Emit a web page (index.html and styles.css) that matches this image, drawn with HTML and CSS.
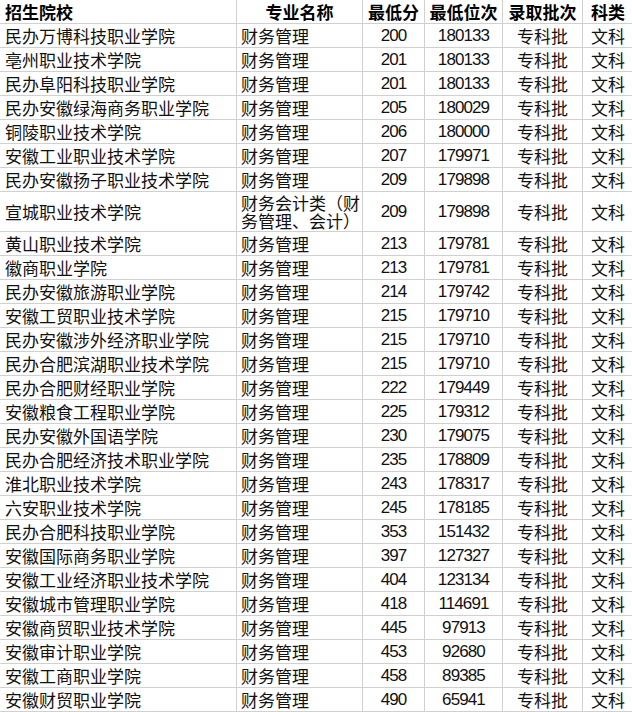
FILE: index.html
```html
<!DOCTYPE html>
<html lang="zh-CN">
<head>
<meta charset="utf-8">
<title>财务管理专业录取分数</title>
<link rel="stylesheet" href="styles.css">
</head>
<body>
<table class="sheet">
  <colgroup>
    <col class="c-school">
    <col class="c-major">
    <col class="c-score">
    <col class="c-rank">
    <col class="c-batch">
    <col class="c-type">
  </colgroup>
  <thead>
    <tr class="head">
      <th class="left">招生院校</th>
      <th>专业名称</th>
      <th>最低分</th>
      <th>最低位次</th>
      <th>录取批次</th>
      <th>科类</th>
    </tr>
  </thead>
  <tbody>
    <tr><td class="left">民办万博科技职业学院</td><td class="major">财务管理</td><td class="num">200</td><td class="num">180133</td><td>专科批</td><td>文科</td></tr>
    <tr><td class="left">亳州职业技术学院</td><td class="major">财务管理</td><td class="num">201</td><td class="num">180133</td><td>专科批</td><td>文科</td></tr>
    <tr><td class="left">民办阜阳科技职业学院</td><td class="major">财务管理</td><td class="num">201</td><td class="num">180133</td><td>专科批</td><td>文科</td></tr>
    <tr><td class="left">民办安徽绿海商务职业学院</td><td class="major">财务管理</td><td class="num">205</td><td class="num">180029</td><td>专科批</td><td>文科</td></tr>
    <tr><td class="left">铜陵职业技术学院</td><td class="major">财务管理</td><td class="num">206</td><td class="num">180000</td><td>专科批</td><td>文科</td></tr>
    <tr><td class="left">安徽工业职业技术学院</td><td class="major">财务管理</td><td class="num">207</td><td class="num">179971</td><td>专科批</td><td>文科</td></tr>
    <tr><td class="left">民办安徽扬子职业技术学院</td><td class="major">财务管理</td><td class="num">209</td><td class="num">179898</td><td>专科批</td><td>文科</td></tr>
    <tr class="tall"><td class="left">宣城职业技术学院</td><td class="major wrap">财务会计类（财务管理、会计）</td><td class="num">209</td><td class="num">179898</td><td>专科批</td><td>文科</td></tr>
    <tr><td class="left">黄山职业技术学院</td><td class="major">财务管理</td><td class="num">213</td><td class="num">179781</td><td>专科批</td><td>文科</td></tr>
    <tr><td class="left">徽商职业学院</td><td class="major">财务管理</td><td class="num">213</td><td class="num">179781</td><td>专科批</td><td>文科</td></tr>
    <tr><td class="left">民办安徽旅游职业学院</td><td class="major">财务管理</td><td class="num">214</td><td class="num">179742</td><td>专科批</td><td>文科</td></tr>
    <tr><td class="left">安徽工贸职业技术学院</td><td class="major">财务管理</td><td class="num">215</td><td class="num">179710</td><td>专科批</td><td>文科</td></tr>
    <tr><td class="left">民办安徽涉外经济职业学院</td><td class="major">财务管理</td><td class="num">215</td><td class="num">179710</td><td>专科批</td><td>文科</td></tr>
    <tr><td class="left">民办合肥滨湖职业技术学院</td><td class="major">财务管理</td><td class="num">215</td><td class="num">179710</td><td>专科批</td><td>文科</td></tr>
    <tr><td class="left">民办合肥财经职业学院</td><td class="major">财务管理</td><td class="num">222</td><td class="num">179449</td><td>专科批</td><td>文科</td></tr>
    <tr><td class="left">安徽粮食工程职业学院</td><td class="major">财务管理</td><td class="num">225</td><td class="num">179312</td><td>专科批</td><td>文科</td></tr>
    <tr><td class="left">民办安徽外国语学院</td><td class="major">财务管理</td><td class="num">230</td><td class="num">179075</td><td>专科批</td><td>文科</td></tr>
    <tr><td class="left">民办合肥经济技术职业学院</td><td class="major">财务管理</td><td class="num">235</td><td class="num">178809</td><td>专科批</td><td>文科</td></tr>
    <tr><td class="left">淮北职业技术学院</td><td class="major">财务管理</td><td class="num">243</td><td class="num">178317</td><td>专科批</td><td>文科</td></tr>
    <tr><td class="left">六安职业技术学院</td><td class="major">财务管理</td><td class="num">245</td><td class="num">178185</td><td>专科批</td><td>文科</td></tr>
    <tr><td class="left">民办合肥科技职业学院</td><td class="major">财务管理</td><td class="num">353</td><td class="num">151432</td><td>专科批</td><td>文科</td></tr>
    <tr><td class="left">安徽国际商务职业学院</td><td class="major">财务管理</td><td class="num">397</td><td class="num">127327</td><td>专科批</td><td>文科</td></tr>
    <tr><td class="left">安徽工业经济职业技术学院</td><td class="major">财务管理</td><td class="num">404</td><td class="num">123134</td><td>专科批</td><td>文科</td></tr>
    <tr><td class="left">安徽城市管理职业学院</td><td class="major">财务管理</td><td class="num">418</td><td class="num">114691</td><td>专科批</td><td>文科</td></tr>
    <tr><td class="left">安徽商贸职业技术学院</td><td class="major">财务管理</td><td class="num">445</td><td class="num">97913</td><td>专科批</td><td>文科</td></tr>
    <tr><td class="left">安徽审计职业学院</td><td class="major">财务管理</td><td class="num">453</td><td class="num">92680</td><td>专科批</td><td>文科</td></tr>
    <tr><td class="left">安徽工商职业学院</td><td class="major">财务管理</td><td class="num">458</td><td class="num">89385</td><td>专科批</td><td>文科</td></tr>
    <tr><td class="left">安徽财贸职业学院</td><td class="major">财务管理</td><td class="num">490</td><td class="num">65941</td><td>专科批</td><td>文科</td></tr>
  </tbody>
</table>
</body>
</html>
```
FILE: styles.css
```css
html, body {
  margin: 0;
  padding: 0;
  background: #ffffff;
  overflow: hidden;
}

.sheet {
  border-collapse: collapse;
  table-layout: fixed;
  width: 634px;
  margin: -1px 0 0 -1px;
  font-family: "Noto Sans CJK SC", "Noto Sans", sans-serif;
  font-size: 17px;
  color: #111111;
}

.c-school { width: 237px; }
.c-major  { width: 126px; }
.c-score  { width: 62px; }
.c-rank   { width: 78px; }
.c-batch  { width: 80px; }
.c-type   { width: 51px; }

.sheet th,
.sheet td {
  border: 1px solid #d0d0d0;
  padding: 0 1px;
  text-align: center;
  vertical-align: middle;
  white-space: nowrap;
  overflow: hidden;
  line-height: 20px;
}

.sheet tr {
  height: 24px;
}

.sheet .head th {
  font-weight: 700;
  color: #000000;
}

.sheet .left {
  text-align: left;
  padding-left: 5px;
}

.sheet .major {
  text-align: left;
  padding-left: 4px;
  padding-right: 0;
}

.sheet .wrap {
  white-space: normal;
  overflow: visible;
  line-height: 18px;
}

.sheet .num {
  font-family: "Liberation Sans", Arial, sans-serif;
  letter-spacing: -0.9px;
}

.sheet tr.tall {
  height: 40px;
}
```
